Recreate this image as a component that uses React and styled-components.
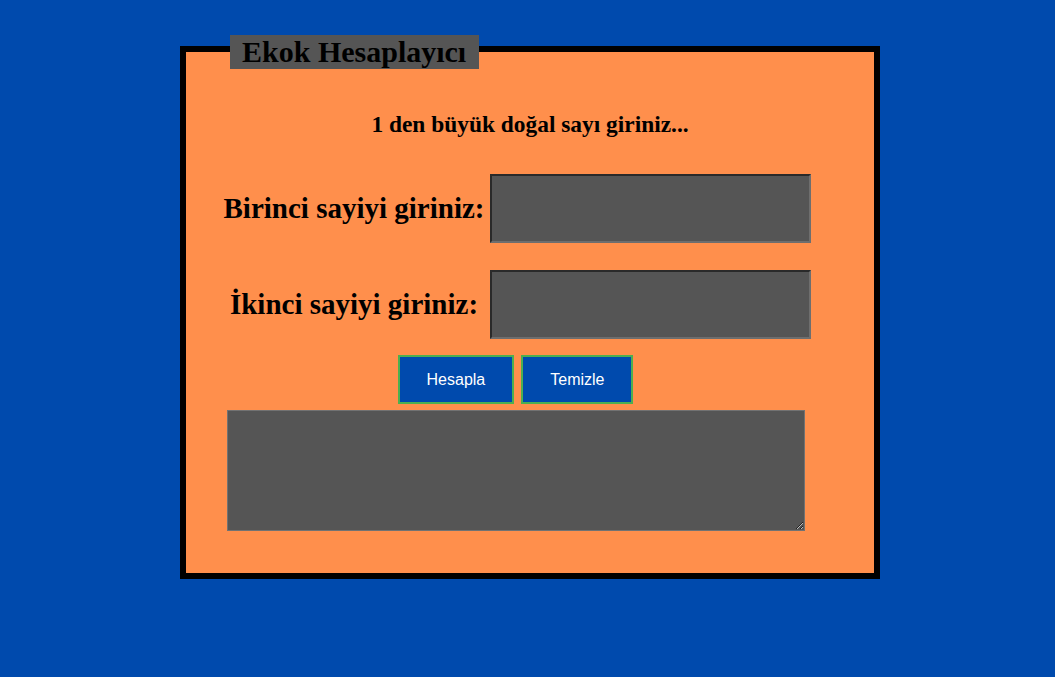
import React from "react";
import styled, { createGlobalStyle } from "styled-components";

const GlobalStyle = createGlobalStyle`
  body {
    margin: 0;
    background-color: #004aad;
    font-family: "Liberation Serif", "Times New Roman", serif;
  }
`;

function App() {
  return (
    <>
      <GlobalStyle />
      <Frame>
        <Legend>Ekok Hesaplayıcı</Legend>
        <Subtitle>1 den büyük doğal sayı giriniz...</Subtitle>
        <Panel>
          <FormGrid>
            <Label htmlFor="birinci">Birinci sayiyi giriniz:</Label>
            <NumberInput id="birinci" type="text" />
            <Label htmlFor="ikinci">İkinci sayiyi giriniz:</Label>
            <NumberInput id="ikinci" type="text" />
          </FormGrid>
          <ButtonRow>
            <Button type="button">Hesapla</Button>
            <Button type="button">Temizle</Button>
          </ButtonRow>
          <Result />
        </Panel>
      </Frame>
    </>
  );
}

const Frame = styled.fieldset`
  box-sizing: border-box;
  width: 700px;
  margin: 32px 0 0 180px;
  padding: 0;
  border: 6px solid #000;
  background-color: #ff8f4c;
`;

const Legend = styled.legend`
  position: relative;
  top: 3px;
  margin-left: 44px;
  padding: 0 13px 0 12px;
  background-color: #555;
  color: #000;
  font-size: 30px;
  font-weight: bold;
  line-height: 34px;
`;

const Subtitle = styled.h3`
  margin: 45px 0 0;
  font-size: 23.4px;
  font-weight: bold;
  color: #000;
  line-height: 27px;
  text-align: center;
`;

const Panel = styled.div`
  display: flex;
  flex-direction: column;
  align-items: center;
  padding: 0 29px 0 0;
`;

const FormGrid = styled.div`
  display: grid;
  grid-template-columns: 267px 321px;
  grid-auto-rows: 69px;
  column-gap: 2px;
  row-gap: 27px;
  margin-top: 36px;
  align-items: center;
`;

const Label = styled.label`
  text-align: center;
  font-size: 29px;
  font-weight: bold;
  color: #000;
`;

const NumberInput = styled.input`
  box-sizing: border-box;
  width: 321px;
  height: 69px;
  margin: 0;
  background-color: #555;
  border-style: solid;
  border-width: 2px;
  border-color: #2a2a2a #6e6e6e #6e6e6e #2a2a2a;
  color: #fff;
  font-size: 20px;
  outline: none;
`;

const ButtonRow = styled.div`
  display: flex;
  gap: 7px;
  margin-top: 16px;
`;

const Button = styled.button`
  box-sizing: border-box;
  height: 49px;
  padding: 0 27px;
  border: 2px solid #4caf50;
  background-color: #004aad;
  color: #fff;
  font-family: "Liberation Sans", Arial, sans-serif;
  font-size: 16px;
  cursor: pointer;
`;

const Result = styled.textarea`
  box-sizing: border-box;
  display: block;
  width: 578px;
  height: 121px;
  margin: 6px 0 42px;
  background-color: #555;
  border: 1px solid #727272;
  color: #fff;
`;

export default App;
